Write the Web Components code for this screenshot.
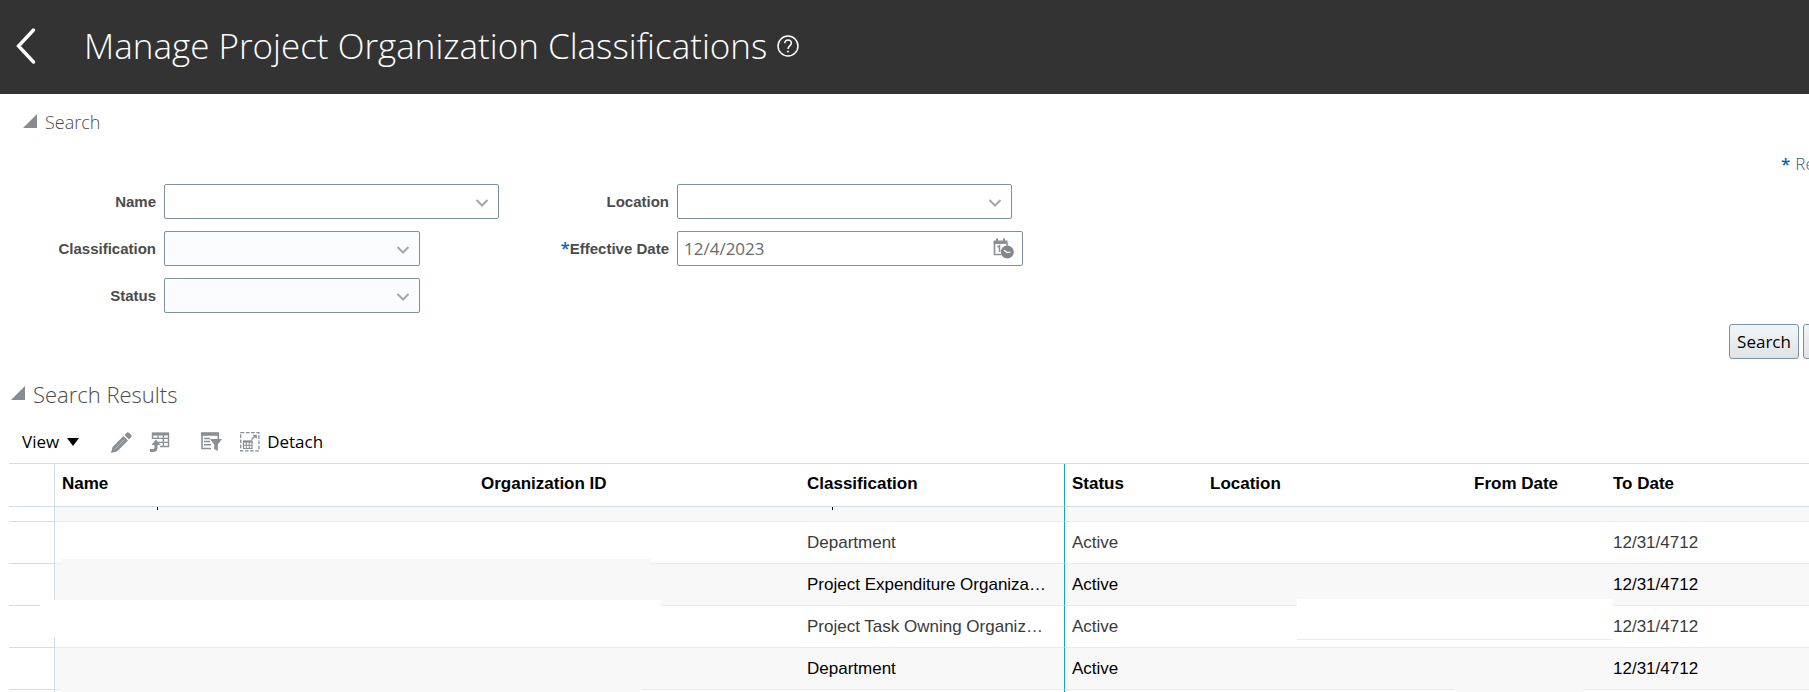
<!DOCTYPE html>
<html lang="en">
<head>
<meta charset="utf-8">
<title>Manage Project Organization Classifications</title>
<style>
  html, body { margin: 0; background: #fff; }
  body { min-height: 100vh; overflow: hidden; font: 17px/24px "Open Sans", sans-serif; color: #000; }
</style>
</head>
<body>
<classification-page></classification-page>

<script>
const define = (name, html, setup) => customElements.define(name, class extends HTMLElement {
  constructor() {
    super();
    const root = this.attachShadow({ mode: 'open' });
    const t = document.createElement('template');
    t.innerHTML = html;
    root.append(t.content.cloneNode(true));
    this.setup = setup;
  }
  connectedCallback() {
    if (this.setup && !this.ready) { this.ready = true; this.setup(this.shadowRoot, this); }
  }
});

define('page-header', `
  <style>
    :host { display: block; background: #333; color: #fff; }
    header { box-sizing: border-box; display: flex; align-items: center; height: 94px; padding: 0 0 2px 16px; }
    button { border: 0; background: none; padding: 0; color: inherit; display: flex; }
    .back { width: 68px; }
    h1 { margin: 0; font-size: 35px; line-height: 48px; font-weight: 300; white-space: nowrap; }
    .help { margin-left: 10px; }
  </style>
  <header>
    <button class="back" aria-label="Back"><svg width="22" height="38" viewBox="0 0 22 38" fill="none" stroke="#fff" stroke-width="3.4" stroke-linecap="round"><path d="M17.500 3L2.500 19L17.500 35"/></svg></button>
    <h1><slot></slot></h1>
    <button class="help" aria-label="Help"><svg width="22" height="22" viewBox="0 0 22 22" fill="none" stroke="#fff" stroke-width="1.500"><circle cx="11" cy="11" r="10"/><path d="M7.800 8.300C7.800 3.700 14.400 4 14.400 8C14.400 10.800 11 10.900 11 14"/><circle cx="11" cy="16.600" r=".6" fill="#fff" stroke-width="1"/></svg></button>
  </header>`);

define('section-title', `
  <style>
    :host { display: block; color: #4a4a4a; }
    h2 { margin: 0; display: flex; align-items: center; gap: 8px; font-size: var(--title-size, 18px); line-height: 28px; font-weight: 300; }
    svg { flex: none; margin-bottom: 2px; }
  </style>
  <h2><svg width="14" height="14" viewBox="0 0 14 14"><path d="M14 0V14H0Z" fill="#878c90"/></svg><slot></slot></h2>`);

const fieldStyle = `
    :host { display: block; }
    .field { display: grid; grid-template-columns: 156px max-content; column-gap: 8px; align-items: center; }
    label { text-align: right; font: bold 15px/20px "Liberation Sans", sans-serif; color: #4b4b4b; white-space: nowrap; }
    .req { color: #0464b4; font: 600 17px/16px "Open Sans", sans-serif; }
    .box { position: relative; width: var(--field-width, 335px); height: 35px; }
    select, input { box-sizing: border-box; width: 100%; height: 100%; margin: 0; appearance: none; border: 1px solid #7d909b; border-radius: 2px;
      background: var(--field-fill, #fff); padding: 0 6px; font: 17px/24px "Open Sans", sans-serif; color: #6a6a6a; outline: 0; }
    svg { position: absolute; pointer-events: none; }
    .chev { right: 10px; top: 14px; }
    .cal { right: 9px; top: 7px; }`;

define('select-field', `
  <style>${fieldStyle}</style>
  <div class="field"><label for="c"></label>
    <div class="box"><select id="c"><option></option></select>
      <svg class="chev" width="14" height="10" viewBox="0 0 14 10" fill="none" stroke="#a4a7aa" stroke-width="2"><path d="M1.500 2L7 7.500L12.500 2"/></svg></div>
  </div>`, (root, host) => { root.querySelector('label').textContent = host.getAttribute('label'); });

define('date-field', `
  <style>${fieldStyle}</style>
  <div class="field"><label for="c"><span class="req">*</span><span class="text"></span></label>
    <div class="box"><input id="c" type="text">
      <svg class="cal" width="21" height="21" viewBox="0 0 21 21">
        <path d="M1.500 4V16.500H8" fill="none" stroke="#8b9094" stroke-width="1.600"/>
        <path d="M.7 2.500H14.500V6H.7Z" fill="#8b9094"/>
        <path d="M3 .5H5V3.500H3ZM10 .5H12V3.500H10Z" fill="#8b9094"/>
        <path d="M14 5V8" stroke="#8b9094" stroke-width="1.500"/>
        <path d="M4.500 9L6.500 7.800V14" fill="none" stroke="#8b9094" stroke-width="1.500"/>
        <circle cx="14.300" cy="14" r="6.500" fill="#82878b"/>
        <path d="M11 12.200L14.200 14.600L17.500 14.200" fill="none" stroke="#fff" stroke-width="1.300"/>
      </svg></div>
  </div>`, (root, host) => {
    root.querySelector('.text').textContent = host.getAttribute('label');
    root.querySelector('input').value = host.getAttribute('value');
  });

define('search-panel', `
  <style>
    :host { display: block; }
    section-title { padding: 14px 0 0 23px; }
    .legend { display: flex; justify-content: flex-end; height: 24px; padding-top: 16px; }
    .legend div { width: 28px; display: flex; gap: 5px; overflow: hidden; font-weight: 300; color: #365a70; white-space: nowrap; }
    .legend b { color: #0464b4; font-weight: 600; }
    form { display: flex; padding-top: 8px; }
    .col { display: grid; gap: 12px; align-content: start; }
    .col:first-child { width: 513px; }
    .short { --field-width: 256px; --field-fill: #fbfcff; }
    .date { --field-width: 346px; }
    .actions { display: flex; justify-content: flex-end; gap: 4px; padding-top: 11px; }
    button { box-sizing: border-box; height: 35px; width: 70px; flex: none; padding: 0; border: 1px solid #7891a5; border-radius: 3px;
      background: linear-gradient(#f3f5f5, #dfe3e7); font: 17px/24px "Open Sans", sans-serif; color: #000; }
    .cut { width: 6px; overflow: hidden; display: flex; }
  </style>
  <section-title>Search</section-title>
  <div class="legend"><div><b>*</b><span>Re</span></div></div>
  <form>
    <div class="col">
      <select-field label="Name"></select-field>
      <select-field class="short" label="Classification"></select-field>
      <select-field class="short" label="Status"></select-field>
    </div>
    <div class="col">
      <select-field label="Location"></select-field>
      <date-field class="date" label="Effective Date" value="12/4/2023"></date-field>
    </div>
  </form>
  <div class="actions"><button type="button">Search</button><div class="cut"><button type="button" aria-label="Reset"></button></div></div>`);

define('results-toolbar', `
  <style>
    :host { display: block; }
    div { display: flex; align-items: center; height: 40px; padding-left: 22px; }
    button { border: 0; background: none; padding: 0; display: flex; align-items: center; gap: 7px; font: 17px/24px "Open Sans", sans-serif; color: #000; }
    .view { margin-right: 32px; gap: 8px; }
    .edit { margin-right: 18px; }
    .export { margin-right: 31px; }
    .query { margin-right: 18px; }
    svg { display: block; }
  </style>
  <div>
    <button class="view">View <svg width="12" height="8" viewBox="0 0 12 8"><path d="M0 0H12L6 8Z"/></svg></button>
    <button class="edit" aria-label="Edit"><svg width="21" height="21" viewBox="0 0 21 21" fill="#8a8f93"><path d="M0 21L1.500 15L12.500 4L17 8.500L6 19.500Z"/><path d="M13.500 3L16 .6Q17 0 18 .8L20.300 3Q21 4 20.300 5L18 7.500Z"/><path d="M3.500 17.500L13.500 7.500" stroke="#b9bcbf" stroke-width="1"/></svg></button>
    <button class="export" aria-label="Export"><svg width="20" height="21" viewBox="0 0 20 21" fill="none" stroke="#8a8f93"><path d="M2.500 7V1.500H18.500V14.500H10" stroke-width="1.400"/><path d="M2 2H19" stroke-width="3"/><path d="M3 6.300H18.500M8 10.400H18.500M8 2V7M13.300 2V14.500" stroke-width="1.300"/><path d="M0 18.500H3Q6 18.500 6 15.500V12" stroke-width="3"/><path d="M1.500 13L6 7.500L10.500 13Z" fill="#8a8f93" stroke="none"/></svg></button>
    <button class="query" aria-label="Query by example"><svg width="21" height="20" viewBox="0 0 21 20" fill="none" stroke="#8a8f93"><path d="M0 2H18" stroke-width="3.600"/><path d="M1 3V16.500H10M17.300 3V7" stroke-width="1.600"/><path d="M3 6.500H9M3 9.500H9M3 12.700H10" stroke-width="1.400"/><path d="M9 7H21L16.800 12.500V19L13.200 17V12.500Z" fill="#8a8f93" stroke="none"/></svg></button>
    <button class="detach"><svg width="20" height="20" viewBox="0 0 20 20" fill="none" stroke="#8a8f93"><rect x=".7" y=".7" width="18.200" height="18.200" stroke-width="1.300" stroke-dasharray="3.600 1.600"/><path d="M3.500 9H12V16.500H3.500Z" stroke-width="1.200"/><path d="M3 9.700H12.500" stroke-width="2"/><path d="M6.300 9V16.500M9.200 9V16.500M3.500 13.300H12" stroke-width="1"/><path d="M11.500 7.500L15.500 3.700" stroke-width="1.400"/><path d="M12.500 2.800H16.800V7Z" fill="#8a8f93" stroke="none"/></svg>Detach</button>
  </div>`);

define('results-table', `
  <style>
    :host { display: block; position: relative; margin-left: 9px; font: 17px/20px "Liberation Sans", sans-serif; }
    table { width: 100%; table-layout: fixed; border-collapse: separate; border-spacing: 0; border-top: 1px solid #d3dce4; }
    th, td { box-sizing: border-box; height: 42px; padding: 0 7px; text-align: left; vertical-align: middle; border-bottom: 1px solid #ebebeb; white-space: nowrap; overflow: hidden; }
    th { height: 43px; padding-bottom: 2px; font-weight: bold; border-bottom-color: #d3dce4; }
    td { color: #3a3a3a; }
    .alt td { background: #f8f8f8; color: #000; }
    tr > :first-child, .alt td:first-child { border-right: 1px solid #d3dce4; border-bottom-color: #d3dce4; background: #fff; }
    tr > :nth-child(4) { border-right: 1px solid #1a9fc0; }
    .cut td { height: 15px; }
    i { position: absolute; display: block; background: #fff; }
    .alt-fill { background: #f8f8f8; }
    .stem { top: 44px; width: 1px; height: 3px; background: #000; }
  </style>
  <table>
    <colgroup><col style="width:46px"><col style="width:419px"><col style="width:326px"><col style="width:265px"><col style="width:138px"><col style="width:264px"><col style="width:139px"><col></colgroup>
    <thead><tr><th></th><th>Name</th><th>Organization ID</th><th>Classification</th><th>Status</th><th>Location</th><th>From Date</th><th>To Date</th></tr></thead>
    <tbody></tbody>
  </table>
  <i class="alt-fill" style="left:52px;top:96px;width:590px;height:8px"></i>
  <i style="left:31px;top:137px;width:621px;height:37px"></i>
  <i style="left:1288px;top:136px;width:316px;height:40px;border-bottom:1px solid #ebebeb"></i>
  <i class="alt-fill" style="left:52px;top:226px;width:580px;height:3px"></i>
  <i class="alt-fill" style="left:1446px;top:226px;width:128px;height:3px"></i>
  <i class="stem" style="left:148px"></i>
  <i class="stem" style="left:823px"></i>`,
  root => {
    const rows = ['Department', 'Project Expenditure Organiza…', 'Project Task Owning Organiz…', 'Department'];
    const blank = '<td></td>';
    root.querySelector('tbody').innerHTML =
      `<tr class="alt cut">${blank.repeat(8)}</tr>` +
      rows.map((c, i) => `<tr${i % 2 ? ' class="alt"' : ''}>${blank.repeat(3)}<td>${c}</td><td>Active</td>${blank.repeat(2)}<td>12/31/4712</td></tr>`).join('') +
      `<tr>${blank.repeat(8)}</tr>`;
  });

define('classification-page', `
  <style>
    :host { display: block; height: 100vh; overflow: hidden; }
    .results-title { --title-size: 22px; padding: 21px 0 0 11px; }
    results-toolbar { padding: 14px 0 1px; }
  </style>
  <page-header>Manage Project Organization Classifications</page-header>
  <main>
    <search-panel></search-panel>
    <section-title class="results-title">Search Results</section-title>
    <results-toolbar></results-toolbar>
    <results-table></results-table>
  </main>`);
</script>
</body>
</html>
